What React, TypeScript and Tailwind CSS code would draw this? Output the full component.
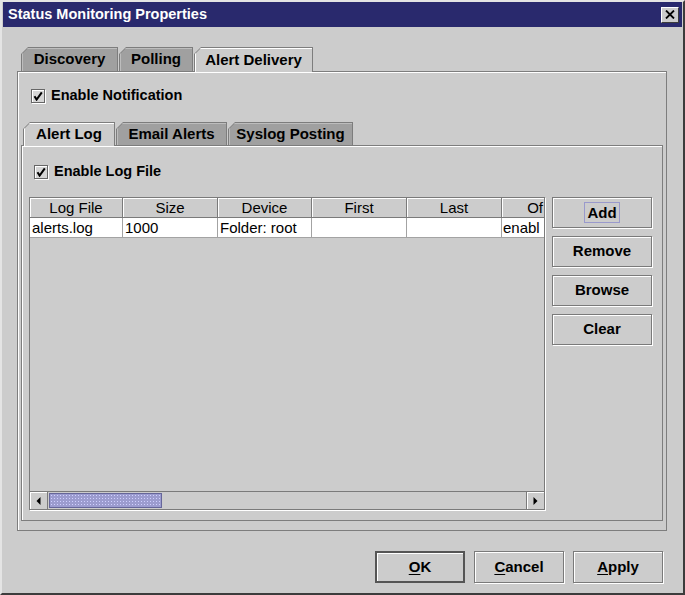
import type { ReactNode } from 'react'

const COLS = [
  { label: 'Log File', w: 'w-[93px]', value: 'alerts.log', head: 'justify-center' },
  { label: 'Size', w: 'w-[95px]', value: '1000', head: 'justify-center' },
  { label: 'Device', w: 'w-[94px]', value: 'Folder: root', head: 'justify-center' },
  { label: 'First', w: 'w-[95px]', value: '', head: 'justify-center' },
  { label: 'Last', w: 'w-[95px]', value: '', head: 'justify-center' },
  { label: 'Of', w: 'w-[42px]', value: 'enabl', head: 'justify-end pr-[1px]' },
]

function Tab(props: { label: string; width: string; selected?: boolean; height: string }) {
  return (
    <div
      className={`${props.width} ${props.height} ${props.selected ? 'relative z-10' : ''} shrink-0 bg-[#7d7d7d] px-px pt-px [clip-path:polygon(7px_0,100%_0,100%_100%,0_100%,0_7px)]`}
    >
      <div
        className={`flex h-full items-center justify-center text-[15px] font-bold [clip-path:polygon(6px_0,100%_0,100%_100%,0_100%,0_6px)] ${
          props.selected ? 'bg-[#cccccc] shadow-[inset_1px_1px_0_#ffffff]' : 'bg-[#a0a0a0] shadow-[inset_1px_1px_0_#bdbdbd]'
        }`}
      >
        {props.label}
      </div>
    </div>
  )
}

function CheckBox() {
  return (
    <span className="flex h-[14px] w-[14px] shrink-0 items-center justify-center border border-[#666666] bg-[#d6d6d6] shadow-[1px_1px_0_#ffffff,inset_1px_1px_0_#ffffff]">
      <svg width="10" height="10" viewBox="0 0 10 10">
        <path d="M1.5 5.2 L3.6 8.6 L8.8 1.4" stroke="#000" strokeWidth="2" fill="none" />
      </svg>
    </span>
  )
}

function Btn(props: { children: ReactNode; className: string; primary?: boolean }) {
  return (
    <button
      type="button"
      className={`flex items-center justify-center bg-[#cccccc] text-[15px] font-bold text-black ${
        props.primary
          ? 'border-2 border-[#555555] shadow-[inset_1px_1px_0_#ffffff]'
          : 'border border-[#7a7a7a] shadow-[inset_1px_1px_0_#ffffff,1px_1px_0_#ffffff]'
      } ${props.className}`}
    >
      {props.children}
    </button>
  )
}

function Arrow(props: { dir: 'left' | 'right' }) {
  return (
    <div className="flex h-full w-[18px] shrink-0 items-center justify-center border-r border-[#7a7a7a] bg-[#cccccc] shadow-[inset_1px_1px_0_#ffffff] last:border-r-0 last:border-l">
      <svg width="5" height="8" viewBox="0 0 5 8">
        {props.dir === 'left' ? <path d="M4.5 0 L0.5 4 L4.5 8 Z" fill="#000" /> : <path d="M0.5 0 L4.5 4 L0.5 8 Z" fill="#000" />}
      </svg>
    </div>
  )
}

export default function App() {
  return (
    <div className="h-[595px] w-[685px] overflow-hidden bg-[#cccccc] font-['Liberation_Sans',Arial,Helvetica,sans-serif] text-black">
      <div className="flex h-full flex-col border-2 border-t-[#e4e4e4] border-l-[#e4e4e4] border-r-[#3c3c3c] border-b-[#3c3c3c] px-px">
        {/* title bar */}
        <div className="flex h-[25px] shrink-0 items-center justify-between bg-[#29296d] pl-[5px] pr-[3px]">
          <span className="text-[14.5px] font-bold leading-none text-white">Status Monitoring Properties</span>
          <div className="flex h-[16px] w-[18px] items-center justify-center border border-t-white border-l-white border-r-[#3c3c3c] border-b-[#3c3c3c] bg-[#cccccc]">
            <svg width="10" height="9" viewBox="0 0 10 9">
              <path d="M1 0.5 L9 8.5 M9 0.5 L1 8.5" stroke="#000" strokeWidth="1.8" />
            </svg>
          </div>
        </div>

        {/* outer tabs */}
        <div className="ml-[14px] mt-[20px] flex w-[650px] flex-col">
          <div className="relative z-10 -mb-px flex h-[25px] items-start gap-px pl-[4px]">
            <Tab label="Discovery" width="w-[97px]" height="h-[24px]" />
            <Tab label="Polling" width="w-[74px]" height="h-[24px]" />
            <Tab label="Alert Delivery" width="w-[119px]" height="h-[25px]" selected />
          </div>

          <div className="flex h-[460px] flex-col border border-[#7d7d7d] shadow-[inset_1px_1px_0_#ffffff]">
            <div className="mt-[16px] flex h-[16px] items-center gap-[6px] pl-[13px]">
              <CheckBox />
              <span className="text-[14.5px] font-bold">Enable Notification</span>
            </div>

            {/* inner tabs */}
            <div className="mx-[3px] mt-[18px] flex flex-col">
              <div className="relative z-10 -mb-px flex h-[24px] items-start gap-px pl-[2px]">
                <Tab label="Alert Log" width="w-[92px]" height="h-[24px]" selected />
                <Tab label="Email Alerts" width="w-[111px]" height="h-[23px]" />
                <Tab label="Syslog Posting" width="w-[125px]" height="h-[23px]" />
              </div>

              <div className="flex h-[376px] flex-col border border-[#7d7d7d] shadow-[inset_1px_1px_0_#ffffff]">
                <div className="mt-[18px] flex h-[16px] items-center gap-[6px] pl-[12px]">
                  <CheckBox />
                  <span className="text-[14.5px] font-bold">Enable Log File</span>
                </div>

                <div className="mt-[17px] flex gap-[7px] pl-[7px]">
                  {/* table */}
                  <div className="flex h-[313px] w-[516px] flex-col overflow-hidden border border-[#7a7a7a] bg-[#cccccc] shadow-[1px_1px_0_#ffffff]">
                    <div className="flex h-[20px] shrink-0">
                      {COLS.map((c) => (
                        <div
                          key={c.label}
                          className={`${c.w} ${c.head} flex shrink-0 items-center overflow-hidden whitespace-nowrap border-r border-b border-[#7a7a7a] bg-[#cccccc] text-[15px] leading-none shadow-[inset_1px_1px_0_#ffffff] last:border-r-0`}
                        >
                          {c.label}
                        </div>
                      ))}
                    </div>
                    <div className="flex h-[20px] shrink-0">
                      {COLS.map((c) => (
                        <div
                          key={c.label}
                          className={`${c.w} flex shrink-0 items-center overflow-hidden whitespace-nowrap border-r border-b border-[#a3a3a3] bg-white pl-[2px] text-[15px] leading-none last:border-r-0 last:pl-px`}
                        >
                          {c.value}
                        </div>
                      ))}
                    </div>
                    <div className="flex-1" />
                    {/* horizontal scrollbar */}
                    <div className="flex h-[18px] shrink-0 border-t border-[#7a7a7a] bg-[#cccccc]">
                      <Arrow dir="left" />
                      <div className="flex flex-1 items-stretch py-px pl-px">
                        <div className="w-[113px] border border-[#66669a] bg-[#9c9ccf] bg-[radial-gradient(#d0d0ff_0.7px,transparent_0.9px)] [background-size:3px_3px]" />
                      </div>
                      <Arrow dir="right" />
                    </div>
                  </div>

                  {/* side buttons */}
                  <div className="flex w-[100px] flex-col gap-[8px]">
                    <Btn className="h-[31px] w-[100px]">
                      <span className="border border-[#9999cc] px-[2px] leading-[19px]">Add</span>
                    </Btn>
                    <Btn className="h-[31px] w-[100px]">Remove</Btn>
                    <Btn className="h-[31px] w-[100px]">Browse</Btn>
                    <Btn className="h-[31px] w-[100px]">Clear</Btn>
                  </div>
                </div>
              </div>
            </div>
          </div>
        </div>

        {/* bottom buttons */}
        <div className="mt-[20px] flex justify-end gap-[9px] pr-[19px]">
          <Btn className="h-[32px] w-[90px]" primary>
            <span>
              <span className="underline underline-offset-2">O</span>K
            </span>
          </Btn>
          <Btn className="h-[32px] w-[90px]">
            <span>
              <span className="underline underline-offset-2">C</span>ancel
            </span>
          </Btn>
          <Btn className="h-[32px] w-[90px]">
            <span>
              <span className="underline underline-offset-2">A</span>pply
            </span>
          </Btn>
        </div>
      </div>
    </div>
  )
}
